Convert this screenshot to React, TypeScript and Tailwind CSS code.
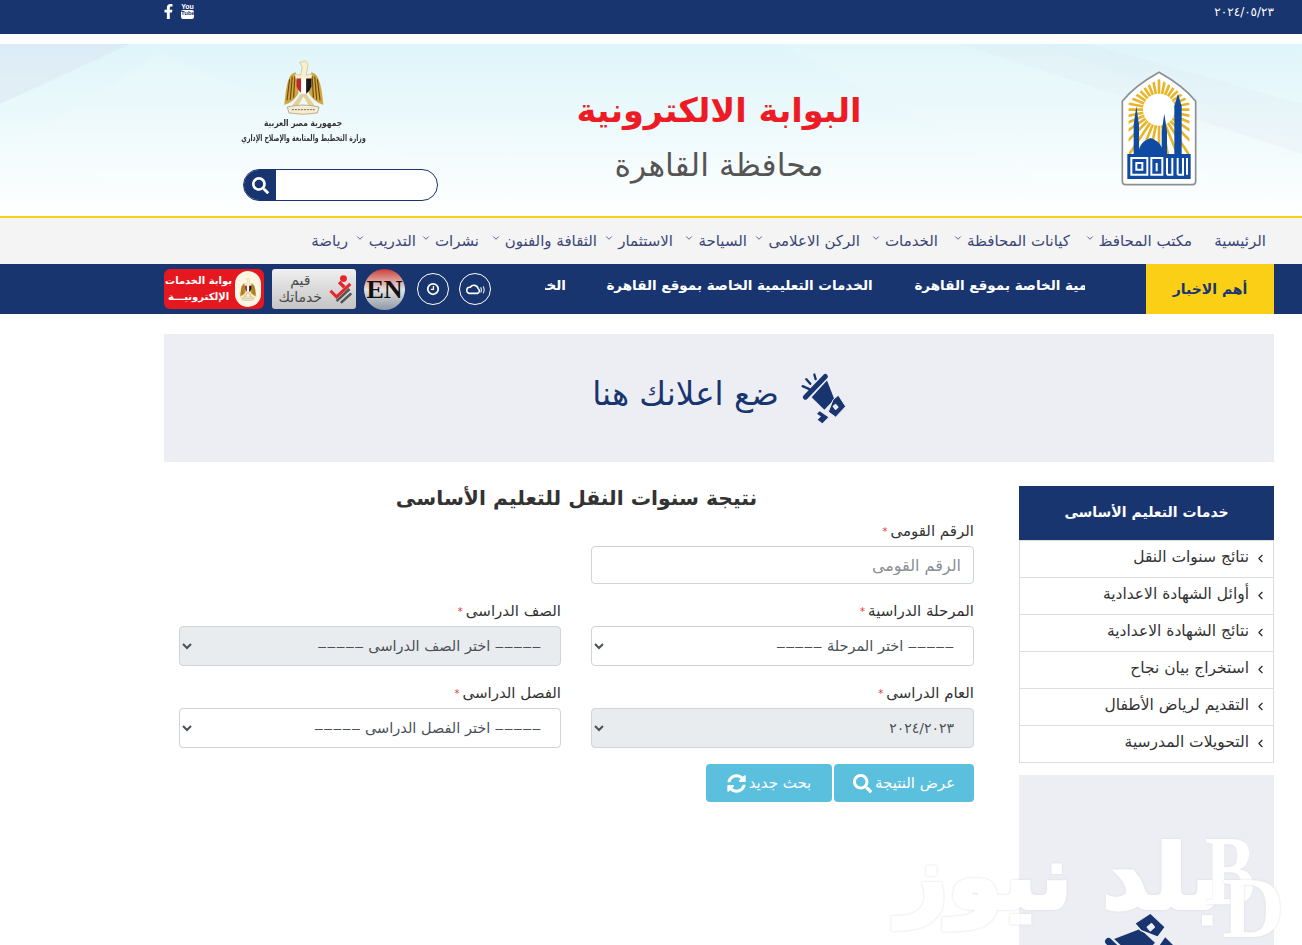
import { FaFacebookF, FaSearch, FaSyncAlt } from 'react-icons/fa'
import { FiChevronDown, FiChevronLeft } from 'react-icons/fi'

const navItems = [
  { label: 'الرئيسية', arrow: false, width: 'w-[74px]' },
  { label: 'مكتب المحافظ', arrow: true, width: 'w-[122px]' },
  { label: 'كيانات المحافظة', arrow: true, width: 'w-[132px]' },
  { label: 'الخدمات', arrow: true, width: 'w-[78px]' },
  { label: 'الركن الاعلامى', arrow: true, width: 'w-[113px]' },
  { label: 'السياحة', arrow: true, width: 'w-[74px]' },
  { label: 'الاستثمار', arrow: true, width: 'w-[76px]' },
  { label: 'الثقافة والفنون', arrow: true, width: 'w-[118px]' },
  { label: 'نشرات', arrow: true, width: 'w-[63px]' },
  { label: 'التدريب', arrow: true, width: 'w-[68px]' },
  { label: 'رياضة', arrow: false, width: 'w-[40px]' },
]

const sideLinks = [
  'نتائج سنوات النقل',
  'أوائل الشهادة الاعدادية',
  'نتائج الشهادة الاعدادية',
  'استخراج بيان نجاح',
  'التقديم لرياض الأطفال',
  'التحويلات المدرسية',
]

const rays = Array.from({ length: 32 }, (_, i) => (i * Math.PI * 2) / 32)

function Megaphone({ className }: { className?: string }) {
  return (
    <svg viewBox="720 95 135 155" className={className} fill="#183570">
      <line x1="733" y1="170" x2="793" y2="108" stroke="#183570" strokeWidth="15" strokeLinecap="round" />
      <path d="M752 170 L798 120 L820 176 L790 208 Z" />
      <path d="M816 178 L832 164 L854 198 L824 230 L802 214 Z" stroke="#eceef4" strokeWidth="3" />
      <rect x="817" y="192" width="13" height="15" rx="2" fill="#eceef4" transform="rotate(-40 823 199)" />
      <path d="M776 212 L802 230 L784 248 L770 238 L780 228 L768 220 Z" />
      <line x1="725" y1="137" x2="745" y2="146" stroke="#183570" strokeWidth="7" strokeLinecap="round" />
      <line x1="736" y1="116" x2="748" y2="130" stroke="#183570" strokeWidth="7" strokeLinecap="round" />
      <line x1="760" y1="102" x2="764" y2="116" stroke="#183570" strokeWidth="7" strokeLinecap="round" />
    </svg>
  )
}

function Eagle({ className }: { className?: string }) {
  return (
    <svg viewBox="165 25 130 170" className={className}>
      <path d="M207 68 C188 68 178 95 172 166 C190 160 205 150 215 130 Z" fill="#d2a63f" />
      <path d="M253 68 C272 68 284 95 290 166 C272 160 258 150 246 130 Z" fill="#d2a63f" />
      <path d="M180 152 L188 88 M190 150 L196 80 M200 144 L204 76 M280 152 L272 88 M270 150 L264 80 M260 144 L256 76" stroke="#6b4a12" strokeWidth="3.5" />
      <path d="M218 38 L236 32 L244 44 L238 76 L258 72 L252 90 L208 90 L202 72 L222 76 L226 50 Z" fill="#f8efcf" stroke="#c9a355" strokeWidth="1.5" />
      <path d="M209 86 H223 V130 Q214 124 209 110 Z" fill="#c1272d" />
      <path d="M223 86 H238 V132 H223 Z" fill="#fff" />
      <path d="M238 86 H254 V110 Q250 124 238 132 Z" fill="#1a1a1a" />
      <path d="M222 132 L196 168 L214 168 L230 140 L246 168 L264 168 L238 132 Z" fill="#e2d09c" />
      <path d="M181 172 Q230 160 277 172 L272 190 Q230 198 186 190 Z" fill="#f4ecd4" stroke="#a58d57" strokeWidth="2" />
      <path d="M195 180 H265" stroke="#7c6a3f" strokeWidth="3" strokeDasharray="6 3" />
    </svg>
  )
}

function CairoLogo() {
  return (
    <svg viewBox="66 44 228 345" className="w-[76px] h-[115px]">
      <defs>
        <clipPath id="arch">
          <path d="M88 295 V142 Q118 100 180 68 Q242 100 272 142 V295 Z" />
        </clipPath>
      </defs>
      <path d="M70 375 V135 Q105 90 180 48 Q255 90 290 135 V375 Q290 385 280 385 H80 Q70 385 70 375 Z" fill="#fff" stroke="#8b8f92" strokeWidth="5" />
      <g clipPath="url(#arch)">
        {rays.map(a => (
          <line
            key={a}
            x1={180 + 48 * Math.cos(a)}
            y1={160 + 48 * Math.sin(a)}
            x2={180 + 190 * Math.cos(a)}
            y2={160 + 190 * Math.sin(a)}
            stroke="#e8b52a"
            strokeWidth="8"
          />
        ))}
      </g>
      <circle cx="180" cy="160" r="40" fill="#fff" />
      <path d="M104 295 L104 205 L112 150 L120 205 L120 295 Z" fill="#0f4aa3" />
      <path d="M188 295 L188 225 L196 172 L204 225 L204 295 Z" fill="#0f4aa3" />
      <path d="M226 295 L226 150 L237 112 L248 150 L248 295 Z" fill="#0f4aa3" />
      <path d="M118 295 Q118 258 155 245 Q192 258 192 295 Z" fill="#0f4aa3" />
      <rect x="85" y="293" width="190" height="75" fill="#0f4aa3" />
      <g fill="none" stroke="#fff" strokeWidth="6">
        <path d="M97 305 H145 V355 H97 Z M112 320 H130 V340 H112 Z" />
        <path d="M157 355 V305 H190 V355 Z M173 320 V345" />
        <path d="M204 305 V355 M220 305 V355 H204 M236 305 V355 M252 305 V355 H236 M264 305 V355" />
      </g>
    </svg>
  )
}

function Field({ label, children }: { label: string; children: React.ReactNode }) {
  return (
    <div className="mb-[17px]">
      <label className="flex items-center h-5 mb-[5px] pt-[1px] text-[15px] text-[#333]">
        {label}
        <span className="text-[#e8333a] text-[10px] mr-[3px]">*</span>
      </label>
      {children}
    </div>
  )
}

function App() {
  return (
    <div dir="rtl" className="relative h-[945px] overflow-hidden bg-white font-['DejaVu_Sans',sans-serif]">
      {/* top bar */}
      <div dir="ltr" className="flex justify-between h-[34px] bg-[#183570] pl-[164px] pr-[28px] text-white">
        <div className="flex gap-[5px] pt-[3px] -ml-[3px]">
          <FaFacebookF className="text-[15px] mt-[1px]" />
          <div className="flex flex-col items-center w-[13px] leading-none font-['Liberation_Sans',sans-serif]">
            <span className="text-[7px] font-bold">You</span>
            <span className="w-[13px] h-[9px] bg-white text-[#183570] rounded-[2px] text-[6px] font-bold text-center">Tube</span>
          </div>
        </div>
        <span className="text-[12px] pt-[3px]">٢٠٢٤/٠٥/٢٣</span>
      </div>

      {/* header */}
      <div dir="ltr" className="relative flex mt-[10px] h-[172px] pl-[243px] pr-[105px] bg-linear-to-b from-[#dff5fa] via-[#eefafc] to-white overflow-hidden">
        <svg className="absolute inset-0 w-full h-full" viewBox="0 0 1302 172" preserveAspectRatio="none">
          <path d="M0 0 L130 0 L0 60 Z" fill="#d8dcee" opacity="0.35" />
          <path d="M0 110 L160 10 L420 120 L260 172 Z" fill="#ffffff" opacity="0.12" />
          <path d="M780 0 L1100 172 L1302 100 L1040 0 Z" fill="#ffffff" opacity="0.12" />
          <path d="M960 0 L1302 110 L1302 60 L1090 0 Z" fill="#d8dcee" opacity="0.15" />
        </svg>
        <div className="relative w-[195px] pt-[14px] flex flex-col items-center">
          <Eagle className="w-[43px] h-[57px] -ml-[74px]" />
          <div dir="rtl" className="w-[125px] -ml-[74px] text-center font-bold text-[#333] leading-[15px] mt-[1px] flex flex-col items-center whitespace-nowrap">
            <div className="text-[9px] scale-x-[0.83]">جمهورية مصر العربية</div>
            <div className="text-[9px] scale-x-[0.68]">وزارة التخطيط والمتابعة والإصلاح الإداري</div>
          </div>
          <div className="flex w-[195px] h-[32px] mt-[23px] rounded-full border border-[#183570] bg-white overflow-hidden">
            <div className="flex items-center justify-center w-[32px] bg-[#183570] text-white text-[17px]">
              <FaSearch />
            </div>
          </div>
        </div>
        <div dir="rtl" className="relative w-[562px] text-center pt-[45px]">
          <h1 className="text-[33.5px] leading-[44px] font-bold text-[#ed1c24] whitespace-nowrap">البوابة الالكترونية</h1>
          <p className="text-[31.5px] leading-[40px] mt-[12px] text-[#555] whitespace-nowrap">محافظة القاهرة</p>
        </div>
        <div className="relative ml-auto pt-[27px]">
          <CairoLogo />
        </div>
      </div>

      {/* nav */}
      <div className="border-t-2 border-[#fbcf17] bg-[#f4f4f4] h-[48px] flex items-center pr-[36px] text-[15px] text-[#3a4778] whitespace-nowrap">
        {navItems.map(item => (
          <span key={item.label} className={`flex items-center gap-[4px] shrink-0 ${item.width}`}>
            {item.label}
            {item.arrow && <FiChevronDown className="text-[10px] -mt-[6px] shrink-0" />}
          </span>
        ))}
      </div>

      {/* news bar */}
      <div className="flex h-[50px] bg-[#183570] pr-[28px] pl-[164px] text-white">
        <div className="flex items-center justify-center w-[128px] shrink-0 bg-[#fccf17] text-[#183570] text-[14px] font-bold pt-[1px]">
          أهم الاخبار
        </div>
        <div className="w-[540px] mr-[61px] overflow-hidden text-[13.5px] font-bold whitespace-nowrap">
          <div className="flex gap-[39px] -mr-[97px] pt-[11px]">
            <span className="w-[269px] shrink-0 text-center">الخدمات التعليمية الخاصة بموقع القاهرة</span>
            <span className="w-[269px] shrink-0 text-center">الخدمات التعليمية الخاصة بموقع القاهرة</span>
            <span className="w-[269px] shrink-0 text-right">الخدمات التعليمية الخاصة بموقع القاهرة</span>
          </div>
        </div>
        <div dir="ltr" className="flex items-center mr-auto">
          {/* red services badge */}
          <div dir="rtl" className="flex items-center w-[100px] h-[40px] rounded-[6px] bg-[#e5171f] pr-[3px] font-bold leading-[16px]">
            <div className="flex items-center justify-center w-[26px] h-[36px] rounded-full bg-[#fdf6e3] shrink-0">
              <Eagle className="w-[18px] h-[24px]" />
            </div>
            <div className="mr-[3px] text-center whitespace-nowrap text-[10px]">
              <div>بوابة الخدمات</div>
              <div>الإلكترونيـــة</div>
            </div>
          </div>
          {/* rate your services badge */}
          <div dir="rtl" className="flex items-center gap-[5px] w-[84px] h-[40px] ml-[8px] pr-[3px] rounded-[3px] bg-linear-to-b from-[#f0f0f0] to-[#c4c4c4] text-[#4a4a4a] text-[14px] leading-[17px]">
            <svg viewBox="0 0 30 34" className="w-[26px] h-[32px] shrink-0">
              <circle cx="19" cy="5" r="4" fill="#e5272c" />
              <path d="M4 19 L11 26 L27 11" fill="none" stroke="#e5272c" strokeWidth="3.5" />
              <path d="M14 9 L20 15" stroke="#e5272c" strokeWidth="4" />
              <path d="M11 31 L26 17 M16 33 L28 22" stroke="#555" strokeWidth="3" />
            </svg>
            <div className="text-center whitespace-nowrap">
              <div>قيم</div>
              <div>خدماتك</div>
            </div>
          </div>
          {/* english */}
          <div className="flex items-center justify-center w-[41px] h-[41px] ml-[8px] rounded-full bg-linear-to-b from-[#c8383a] via-[#e2e2e2] to-[#8e9aa5] text-[#111] font-['Liberation_Serif',serif] font-bold text-[26px]">
            EN
          </div>
          <div className="flex items-center justify-center w-[32px] h-[32px] ml-[12px] rounded-full border border-white">
            <svg viewBox="0 0 16 16" className="w-[14px] h-[14px]" fill="none" stroke="#fff">
              <circle cx="8" cy="8" r="6" strokeWidth="2" />
              <path d="M8.5 4.5 V8.5 H5.5" strokeWidth="1.5" />
            </svg>
          </div>
          <div className="flex items-center justify-center w-[32px] h-[32px] ml-[10px] rounded-full border border-white">
            <svg viewBox="0 0 24 16" className="w-[21px] h-[14px]" fill="none" stroke="#fff" strokeWidth="1.8">
              <path d="M5 13 H14 A3 3 0 0 0 15 7.5 A5 5 0 0 0 6 6 A3.5 3.5 0 0 0 5 13 Z" />
              <path d="M18 6 Q19.5 9 18 12 M21 5 Q23 9 21 13" strokeWidth="1.2" />
            </svg>
          </div>
        </div>
      </div>

      {/* page body */}
      <div className="pr-[28px] pl-[28px] ml-[136px] pt-[20px]">
        <div className="flex items-center justify-center gap-[22px] h-[128px] bg-[#eceef4]">
          <Megaphone className="w-[45px] h-[52px]" />
          <span className="text-[32.5px] text-[#183570] pb-[8px]">ضع اعلانك هنا</span>
        </div>

        <div className="flex gap-[30px] mt-[24px]">
          {/* sidebar */}
          <aside className="w-[255px] shrink-0">
            <div className="flex items-center justify-center h-[54px] pb-[2px] bg-[#183570] text-white text-[14px] font-bold">
              خدمات التعليم الأساسى
            </div>
            <ul className="border border-b-0 border-[#ddd] text-[15.5px] text-[#333]">
              {sideLinks.map(link => (
                <li key={link} className="flex items-center h-[37px] pb-[2px] pr-[7px] border-b border-[#ddd] -mx-px px-px">
                  <FiChevronLeft className="text-[13px] ml-[5px] text-[#222] shrink-0" />
                  {link}
                </li>
              ))}
            </ul>
            <div className="flex justify-center h-[400px] mt-[12px] pt-[133px] bg-[#eceef4]">
              <Megaphone className="w-[63px] h-[72px] -rotate-90 -ml-[17px]" />
            </div>
          </aside>

          {/* form */}
          <main className="flex-1 px-[15px]">
            <h2 className="h-[35px] text-center text-[20.3px] leading-[24px] font-bold text-[#333] whitespace-nowrap">
              نتيجة سنوات النقل للتعليم الأساسى
            </h2>
            <div className="grid grid-cols-[383px_382px] gap-x-[30px]">
              <Field label="الرقم القومى">
                <input
                  placeholder="الرقم القومى"
                  className="w-full h-[38px] px-3 text-[16px] bg-white border border-[#ced4da] rounded-[4px] placeholder:text-[#8a8f94]"
                />
              </Field>
              <div />
              <Field label="المرحلة الدراسية">
                <select className="w-full h-[40px] px-[15px] text-[14.5px] text-[#495057] bg-white border border-[#ced4da] rounded-[4px]">
                  <option>‒‒‒‒‒ اختر المرحلة ‒‒‒‒‒</option>
                </select>
              </Field>
              <Field label="الصف الدراسى">
                <select className="w-full h-[40px] px-[15px] text-[14.5px] text-[#495057] bg-[#e9ecef] border border-[#ced4da] rounded-[4px]">
                  <option>‒‒‒‒‒ اختر الصف الدراسى ‒‒‒‒‒</option>
                </select>
              </Field>
              <Field label="العام الدراسى">
                <select className="w-full h-[40px] px-[15px] text-[14px] text-[#495057] bg-[#e9ecef] border border-[#ced4da] rounded-[4px]">
                  <option>٢٠٢٤/٢٠٢٣</option>
                </select>
              </Field>
              <Field label="الفصل الدراسى">
                <select className="w-full h-[40px] px-[15px] text-[14.5px] text-[#495057] bg-white border border-[#ced4da] rounded-[4px]">
                  <option>‒‒‒‒‒ اختر الفصل الدراسى ‒‒‒‒‒</option>
                </select>
              </Field>
            </div>
            <div className="flex gap-[2px] -mt-[1px]">
              <button className="flex items-center justify-center gap-[3px] w-[140px] h-[38px] bg-[#5bc0de] text-white text-[15px] rounded-[4px] whitespace-nowrap">
                عرض النتيجة
                <FaSearch className="text-[19px]" />
              </button>
              <button className="flex items-center justify-center gap-[3px] w-[126px] h-[38px] bg-[#5bc0de] text-white text-[15px] rounded-[4px] whitespace-nowrap">
                بحث جديد
                <FaSyncAlt className="text-[19px]" />
              </button>
            </div>
          </main>
        </div>
      </div>

      {/* watermark */}
      <div className="absolute left-[897px] top-[818px] text-[88px] leading-[120px] font-bold text-white whitespace-nowrap [-webkit-text-stroke:4px_#ffffff] drop-shadow-[0_0_1px_#dcdce2]">
        بلد نيوز
      </div>
      <div dir="ltr" className="absolute left-[1205px] top-[821px] font-['Liberation_Serif',serif] font-bold text-[100px] leading-[100px] text-white scale-x-75 origin-left drop-shadow-[0_0_1px_#dcdce2]">
        B
      </div>
      <div dir="ltr" className="absolute left-[1222px] top-[865px] font-['Liberation_Serif',serif] font-bold text-[86px] leading-[86px] text-white drop-shadow-[0_0_1px_#dcdce2]">
        D
      </div>
    </div>
  )
}

export default App
